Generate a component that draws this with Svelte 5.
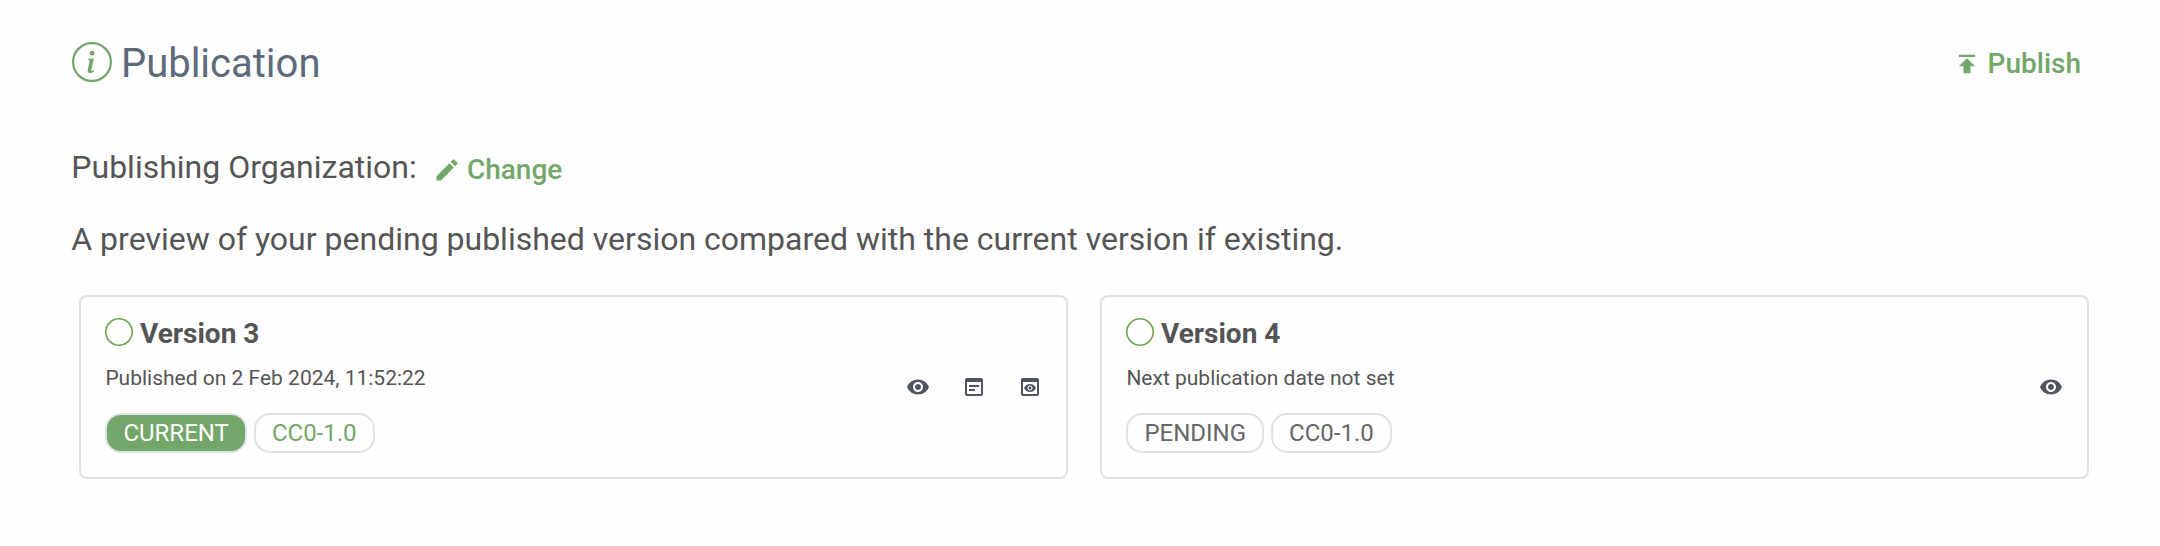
<script>
  const versions = [
    {
      title: 'Version 3',
      date: 'Published on 2 Feb 2024, 11:52:22',
      status: 'CURRENT',
      license: 'CC0-1.0',
      current: true,
      actions: ['eye', 'note', 'preview']
    },
    {
      title: 'Version 4',
      date: 'Next publication date not set',
      status: 'PENDING',
      license: 'CC0-1.0',
      current: false,
      actions: ['eye']
    }
  ];

  const paths = {
    eye: 'M12 4.5C7 4.5 2.73 7.61 1 12c1.73 4.39 6 7.5 11 7.5s9.27-3.11 11-7.5c-1.73-4.39-6-7.5-11-7.5zM12 17c-2.76 0-5-2.24-5-5s2.24-5 5-5 5 2.24 5 5-2.24 5-5 5zm0-8c-1.66 0-3 1.34-3 3s1.34 3 3 3 3-1.34 3-3-1.34-3-3-3z',
    note: 'M19 3H5c-1.1 0-2 .9-2 2v14c0 1.1.9 2 2 2h14c1.1 0 2-.9 2-2V5c0-1.1-.9-2-2-2zm0 16H5V7h14v12zm-2-7H7v-2h10v2zm-4 4H7v-2h6v2z',
    preview: 'M19 3H5c-1.11 0-2 .9-2 2v14c0 1.1.89 2 2 2h14c1.11 0 2-.9 2-2V5c0-1.1-.89-2-2-2zm0 16H5V7h14v12zm-5.5-6c0 .83-.67 1.5-1.5 1.5s-1.5-.67-1.5-1.5.67-1.5 1.5-1.5 1.5.67 1.5 1.5zM12 9c-2.73 0-5.06 1.66-6 4 .94 2.34 3.27 4 6 4s5.06-1.66 6-4c-.94-2.34-3.27-4-6-4zm0 6.5c-1.38 0-2.5-1.12-2.5-2.5s1.12-2.5 2.5-2.5 2.5 1.12 2.5 2.5-1.12 2.5-2.5 2.5z'
  };
</script>

<main>
  <header>
    <h1>
      <svg class="info" viewBox="0 0 40 40">
        <circle cx="20" cy="20" r="18.9" fill="none" stroke="currentColor" stroke-width="2.2" />
        <circle cx="20.1" cy="11.2" r="2.4" fill="currentColor" />
        <path d="M15.8 17.2 21.9 16.2 19.4 27.6C19.1 29 19.6 29.4 20.3 29.1L22.2 28.2 22.5 28.9C20.9 30.4 19.3 31.1 17.9 31.1C16.1 31.1 15.3 30 15.8 27.8L17.5 19.7C17.8 18.4 17.3 18.1 15.7 18.1Z" fill="currentColor" />
      </svg>
      <span>Publication</span>
    </h1>
    <button class="publish">
      <svg viewBox="0 0 24 24"><path d="M5 4v2h14V4H5zm0 10h4v6h6v-6h4l-7-7-7 7z" /></svg>
      <span>Publish</span>
    </button>
  </header>

  <div class="organization">
    <span>Publishing Organization:</span>
    <button class="change">
      <svg viewBox="0 0 24 24"><path d="M3 17.25V21h3.75L17.81 9.94l-3.75-3.75L3 17.25zM20.71 7.04c.39-.39.39-1.02 0-1.41l-2.34-2.34c-.39-.39-1.02-.39-1.41 0l-1.83 1.83 3.75 3.75 1.83-1.83z" /></svg>
      <span>Change</span>
    </button>
  </div>

  <p class="intro">A preview of your pending published version compared with the current version if existing.</p>

  <section class="cards">
    {#each versions as version}
      <article>
        <div class="details">
          <h2>
            <svg class="ring" viewBox="0 0 28 28"><circle cx="14" cy="14" r="13.2" /></svg>
            <span>{version.title}</span>
          </h2>
          <p>{version.date}</p>
          <div class="pills">
            <span class="pill" class:filled={version.current}>{version.status}</span>
            <span class="pill" class:green={version.current}>{version.license}</span>
          </div>
        </div>
        <div class="actions">
          {#each version.actions as action}
            <svg viewBox="0 0 24 24"><path d={paths[action]} /></svg>
          {/each}
        </div>
      </article>
    {/each}
  </section>
</main>

<style>
  :global(body) {
    background: #fefefe;
  }
  main {
    box-sizing: border-box;
    padding: 42px 71px 0 71.3px;
    color: #555;
    font-family: Roboto, sans-serif;
  }
  h1, h2, p {
    margin: 0;
  }
  svg {
    display: block;
    flex: none;
    fill: currentColor;
  }
  header {
    display: flex;
    justify-content: space-between;
    height: 40px;
    padding-right: 8px;
  }
  h1 {
    display: flex;
    gap: 9px;
    padding-left: .6px;
    color: #5c6a7c;
    font-size: 40px;
    font-weight: 400;
    line-height: 44px;
  }
  .info {
    width: 40px;
    height: 40px;
    color: #72a769;
  }
  button {
    display: flex;
    align-items: center;
    padding: 0;
    border: 0;
    background: none;
    color: #72a769;
    font: 500 28px/28px Roboto, sans-serif;
  }
  button svg {
    width: 28px;
    height: 28px;
  }
  .publish {
    gap: 7px;
    height: 44px;
  }
  .organization {
    display: flex;
    align-items: flex-start;
    height: 38px;
    margin-top: 66px;
    font-size: 32px;
    line-height: 38px;
  }
  .change {
    gap: 6px;
    height: 44px;
    margin-left: 16.2px;
  }
  .intro {
    margin-top: 34px;
    font-size: 32px;
    line-height: 38px;
  }
  .cards {
    display: grid;
    grid-template-columns: 1fr 1fr;
    gap: 32px;
    margin-top: 37px;
    padding-left: 7.7px;
  }
  article {
    box-sizing: border-box;
    display: flex;
    justify-content: space-between;
    height: 184px;
    padding: 20px 24px 0;
    border: 2px solid #dee2e6;
    border-radius: 8px;
  }
  h2 {
    display: flex;
    gap: 6.6px;
    height: 32px;
    font-size: 28px;
    font-weight: 700;
    line-height: 34px;
  }
  .ring {
    width: 28px;
    height: 28px;
    margin: 1px 0 0 .4px;
    fill: none;
    stroke: #6aa84f;
    stroke-width: 1.6;
  }
  .details p {
    margin-top: 17px;
    padding-left: .4px;
    font-size: 21px;
    line-height: 24px;
  }
  .pills {
    display: flex;
    gap: 7px;
    margin-top: 23.3px;
    padding-left: .4px;
  }
  .pill {
    box-sizing: border-box;
    height: 39.4px;
    padding: 0 16px;
    border: 2px solid #dee2e6;
    border-radius: 16px;
    color: #666;
    font-size: 24px;
    line-height: 36.6px;
  }
  .pill.filled {
    background: #72a769;
    color: #fff;
  }
  .pill.green {
    color: #72a769;
  }
  .actions {
    display: flex;
    gap: 32px;
    margin-top: 58px;
  }
  .actions svg {
    width: 24px;
    height: 24px;
    color: #4f5660;
  }
</style>
